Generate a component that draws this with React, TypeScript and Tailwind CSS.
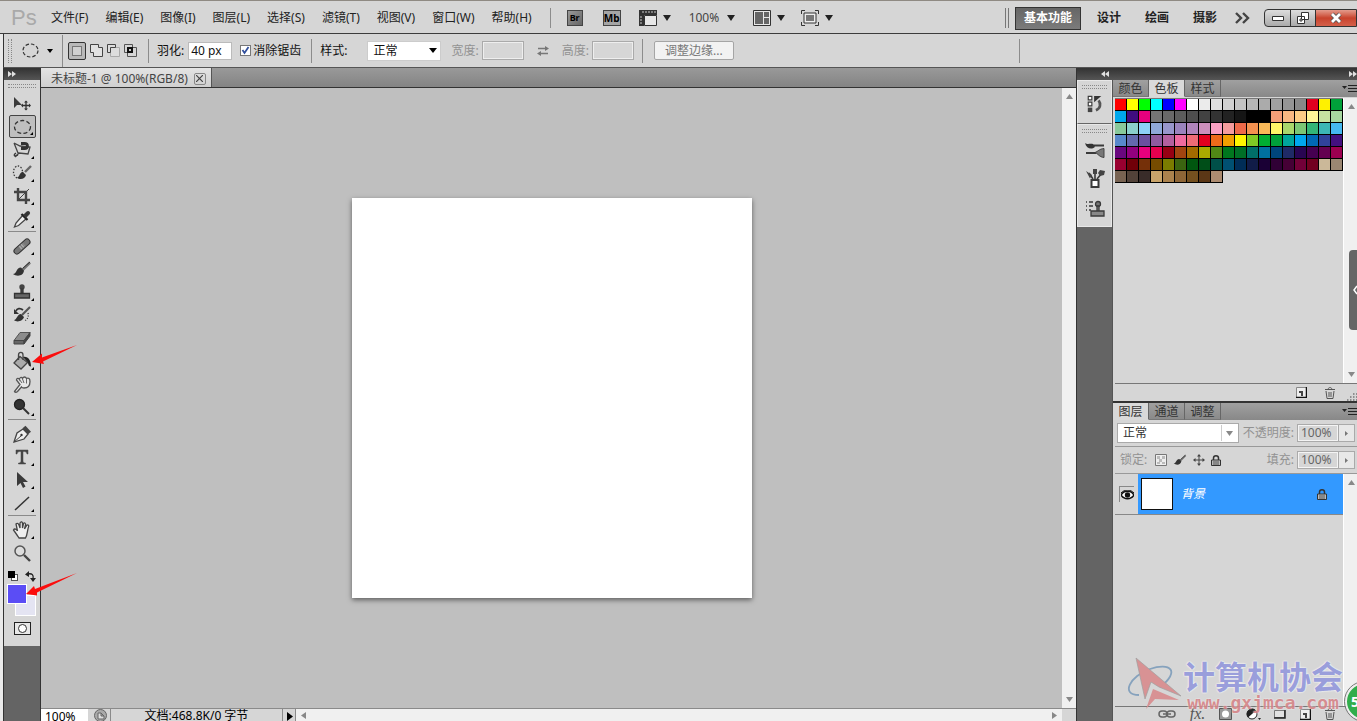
import type { ReactNode } from "react";
import { clsx } from "clsx";

const MENUS = ["文件(F)", "编辑(E)", "图像(I)", "图层(L)", "选择(S)", "滤镜(T)", "视图(V)", "窗口(W)", "帮助(H)"];

const SWATCHES = [
  "ff0000 ffff00 00ff00 00ffff 0000ff ff00ff ffffff ebebeb dedede d1d1d1 c3c3c3 b7b7b7 ababab a0a0a0 959595 898989 e1001f fff100 00a13a",
  "00a8ec 3f0d7f e6007e 747474 686868 5c5c5c 4e4e4e 424242 333333 222222 151515 000000 000000 f49f78 f8b882 fccd86 fff799 c6e2a0 a6d7a0",
  "89c99b 8bcfcc 8dd0f7 8fa9d9 9796cb 9a83bd b084bb cb8ebb faa0c3 f59c9d ee6a4a f39150 f7b858 fff668 aad66c 7bc675 33b577 3cb7b5 45b8f0",
  "5888cb 6369ae 6b4f9f 905a9f b3609f ee6a9f ee6b76 e2001f ee6a1a f29f00 fff500 7fcb25 00ae32 00a13a 00a59c 00a6ee 0068b5 30429a 43107f",
  "6a077f 92007e e8007d e7004f 970013 a14410 a36b00 aaa900 508815 00771e 006f26 006f69 00709f 00467c 1f2a66 280552 450050 640050 9c0050",
  "990030 710008 753009 764c00 7b7c00 3b6410 00570f 004e18 005049 005072 002d57 111c48 1a0035 300035 450035 720038 720020 cbb899 9b8772",
  "786352 524239 392c29 c9a46a ab824d 8e6637 74501f 5b3716 ac8b70",
].flatMap((row) => row.split(" "));

interface IconProps {
  children: ReactNode;
  size?: number;
}

function Icon({ children, size = 20 }: IconProps) {
  return (
    <svg width={size} height={size} viewBox="0 0 20 20" fill="none" stroke="#3a3a3a" strokeWidth="1.3" className="shrink-0">
      {children}
    </svg>
  );
}

const brush = (
  <>
    <path d="M18 3.500 11 10.500" stroke="#777" strokeWidth="2.600" />
    <path d="M18 3 10.500 9.500" stroke="#333" strokeWidth="1" />
    <path d="M1 15C5 15 4 8.500 9 8.500L12 11.500C11.500 17 5 18 1 15Z" fill="#333" stroke="none" />
  </>
);

const stamp = (
  <>
    <circle cx="10" cy="5" r="2.700" fill="#444" stroke="none" />
    <path d="M9 7h2v5H9z" fill="#444" />
    <path d="M2.500 11.500h15v4.500h-15z" fill="#666" stroke="#333" />
  </>
);

const TOOL_GROUPS: { name: string; icon: ReactNode; active?: boolean; single?: boolean }[][] = [
  [
    {
      name: "移动工具",
      single: true,
      icon: (
        <>
          <path d="M2 3v11l3-3h5z" fill="#3a3a3a" stroke="none" />
          <path d="M10 11.500h8M14 7.500v8" stroke="#333" />
          <path d="m9 11.500 2-2v4zM19 11.500l-2-2v4zM14 6.500l-2 2h4zM14 16.500l-2-2h4z" fill="#333" stroke="none" />
        </>
      ),
    },
    { name: "椭圆选框工具", active: true, icon: <ellipse cx="10.500" cy="10" rx="8" ry="6.500" stroke="#333" strokeDasharray="4 2.300" /> },
    {
      name: "磁性套索工具",
      icon: (
        <>
          <path d="m2 3 6 3 10 1-2 7-9-1-4 4M2 3l4 10" stroke="#444" />
          <path d="M9 3.500h3.500c4 0 4 5 0 5H9" stroke="#333" strokeWidth="2.800" />
          <path d="M4 13c-3 2-2 4 2 2" />
        </>
      ),
    },
    {
      name: "快速选择工具",
      icon: (
        <>
          <ellipse cx="6" cy="9" rx="4.500" ry="6" strokeDasharray="1.500 1.500" />
          <path d="m19 3-6 6" stroke="#666" strokeWidth="2.400" />
          <path d="M5 14.500c3-.5 2-5 6-5.500l3 3c-1 4-6 5.500-9 2.500Z" fill="#333" stroke="none" />
        </>
      ),
    },
    {
      name: "裁剪工具",
      icon: (
        <>
          <path d="M6 2v12h12M2 6h12v12" stroke="#444" strokeWidth="2.400" />
          <path d="M6.500 13.500 17 3" stroke="#444" strokeWidth="1" />
        </>
      ),
    },
    {
      name: "吸管工具",
      icon: (
        <>
          <path d="m11 6 3.500 3.500-8 7-4 1.500 1.500-4z" fill="#eee" stroke="#444" />
          <path d="m9.500 5 6 6" stroke="#222" strokeWidth="2.200" />
          <path d="m12 6 3-3c2-1 3 1 2 2l-3 3z" fill="#333" />
        </>
      ),
    },
  ],
  [
    {
      name: "污点修复画笔工具",
      icon: (
        <>
          <path d="m5 15 10-9" stroke="#333" strokeWidth="7" strokeLinecap="round" />
          <path d="m5 15 10-9" stroke="#777" strokeWidth="5" strokeLinecap="round" />
          <path d="m8 12 4-3.500" stroke="#aaa" strokeWidth="4" strokeDasharray="1.500 1" />
        </>
      ),
    },
    { name: "画笔工具", icon: brush },
    { name: "仿制图章工具", icon: stamp },
    {
      name: "历史记录画笔工具",
      icon: (
        <>
          <path d="M18 2 10 10" stroke="#555" strokeWidth="2.200" />
          <path d="M2 15c3 0 3-6 7-6l3 3c-1 4-7 6-10 3Z" fill="#333" stroke="none" />
          <path d="M11 5C8 2.500 5 3.500 4 6" stroke="#333" strokeWidth="1.800" />
          <path d="M2 4v5h5z" fill="#333" stroke="none" />
          <path d="M16 8c1 4-1 7-4 8" strokeDasharray="1 1.500" />
        </>
      ),
    },
    {
      name: "橡皮擦工具",
      icon: (
        <>
          <path d="M8 4.500h10l-6 8H2z" fill="#8c8c8c" stroke="#555" strokeWidth="1" />
          <path d="M2 12.500h10V16H2z" fill="#666" stroke="#444" strokeWidth="1" />
          <path d="m12 12.500 6-8V8l-6 8z" fill="#444" stroke="#444" strokeWidth="1" />
        </>
      ),
    },
    {
      name: "油漆桶工具",
      icon: (
        <>
          <path d="m8 5.500 7.500 6L9 18l-7-6z" fill="#aaa" stroke="#444" />
          <path d="M6.500 9V4c0-3.500 4.500-3.500 4.500 0v5" stroke="#444" />
          <path d="M11 6c5-1 8 3 8 9.500-3.500 0-2-4-4.500-5.500z" fill="#222" stroke="none" />
        </>
      ),
    },
    {
      name: "涂抹工具",
      icon: (
        <>
          <path d="M2.500 17.500 8 10.500 4.500 6C4.500 4 6.500 4 7.500 5.500c0-2 2-3 3-1 1-2 3-2 4 0 2-1 3.500 0 3.500 3 0 4-2 6.500-6 6.500-2 0-2.500-1-2.500-1l-4 4.500c-1 1-3 1-3 0Z" fill="#e8e8e8" stroke="#555" />
          <path d="m7.500 5.500 2.500 3.500M10.500 5l1.500 4M14.500 5v4.500" stroke="#666" strokeWidth="1" />
        </>
      ),
    },
    {
      name: "减淡工具",
      icon: (
        <>
          <circle cx="7.500" cy="7.500" r="5" fill="#333" stroke="#222" />
          <path d="m11 11 6 6" stroke="#333" strokeWidth="2" />
        </>
      ),
    },
  ],
  [
    {
      name: "钢笔工具",
      icon: (
        <>
          <path d="M2 18 5 9l6-4 5 5-4 5z" fill="#eee" stroke="#444" />
          <path d="m12 3 5.500 6" stroke="#444" strokeWidth="4" />
          <path d="m2 18 7-6" stroke="#444" strokeWidth="1" />
          <circle cx="9.500" cy="11" r="1.200" fill="#333" stroke="none" />
        </>
      ),
    },
    {
      name: "横排文字工具",
      icon: (
        <path d="M4 3h12v4h-1c-.5-2-1-2.500-4-2.500V14c0 1.500 1 2 2.500 2v1h-7v-1C8 16 9 15.500 9 14V4.500C6 4.500 5.500 5 5 7H4z" fill="#444" stroke="#444" strokeWidth=".5" />
      ),
    },
    { name: "路径选择工具", icon: <path d="M5 2v14l3.500-3 2.500 5 2.500-1.500L11 12h5z" fill="#3a3a3a" stroke="none" /> },
    { name: "直线工具", icon: <path d="M3 17 17 4" stroke="#333" strokeWidth="1.500" /> },
  ],
  [
    {
      name: "抓手工具",
      icon: (
        <>
          <path d="M7 18c-2-3-4-6-5.500-8 1-2 3-.5 4 1L4 4c1.500-1.500 2.500 0 3 1l1 3V3c1-2 2.500-1 2.500.5V8l1-4.500c1-1.500 2.500 0 2 1.500l-1 4 2.500-4c1.500-.5 2 1 1.500 2-1 2-1 8-3 11z" fill="#eee" stroke="#444" />
        </>
      ),
    },
    {
      name: "缩放工具",
      single: true,
      icon: (
        <>
          <circle cx="8" cy="8" r="5" fill="#ddd" stroke="#555" strokeWidth="1.500" />
          <path d="m12 12 6 6" stroke="#444" strokeWidth="2.400" />
        </>
      ),
    },
  ],
];

function Caret() {
  return (
    <svg width="8" height="6" viewBox="0 0 8 6" className="shrink-0">
      <path d="M0 0h8L4 6z" fill="#222" />
    </svg>
  );
}

function Chevrons({ left }: { left?: boolean }) {
  return (
    <svg width="8" height="6" viewBox="0 0 8 6" className={left ? "rotate-180" : ""}>
      <path d="m0 0 4 3-4 3zM4 0l4 3-4 3z" fill="#e0e0e0" />
    </svg>
  );
}

function Grip() {
  return <div className="mx-1 mt-1 h-1 border-y border-dotted border-[#888]" />;
}

function Divider() {
  return <div className="h-6 w-px shrink-0 bg-[#8c8c8c]" />;
}

function MenuBar() {
  return (
    <header className="flex h-[34px] shrink-0 items-center border-t border-b border-t-[#8f8a83] border-b-[#3c3c3c] bg-[#d6d6d6] pt-0.5 pl-[11px]">
      <span className="w-10 font-['Liberation_Sans'] text-[22px] leading-6 text-[#a9a9a9]">Ps</span>
      <nav className="flex gap-[17px] whitespace-nowrap text-[#222]">
        {MENUS.map((menu) => (
          <button key={menu}>{menu}</button>
        ))}
      </nav>
      <div className="ml-[18px] h-5 w-px bg-[#8c8c8c]" />
      <button className="ml-4 h-4 w-4 border border-[#444] bg-gradient-to-br from-[#999] to-[#666] text-[9px] leading-3 font-bold">Br</button>
      <button className="ml-5 h-4 w-[18px] border border-[#444] bg-[#a5a5a5] text-[10px] leading-3 font-bold">Mb</button>
      <button className="ml-[18px] flex items-center gap-1.5" aria-label="查看额外内容">
        <svg width="18" height="16" viewBox="0 0 18 16">
          <path d="M0 0h18v5H5v11H0z" fill="#333" />
          <path d="M5.500 5.500h12v10h-12z" fill="#e8e8e8" stroke="#333" />
          <path d="M4 1v2M7 1v2M10 1v2M13 1v2M16 1v2M1 7h2M1 10h2M1 13h2" stroke="#ccc" />
        </svg>
        <Caret />
      </button>
      <button className="ml-[18px] flex items-center gap-2 text-[#444]">
        100%
        <Caret />
      </button>
      <button className="ml-[18px] flex items-center gap-1.5" aria-label="排列文档">
        <svg width="18" height="16" viewBox="0 0 18 16">
          <path d="M.5.500h17v15H.5z" fill="#e8e8e8" stroke="#333" />
          <path d="M2 2h8v12H2zM11 2h5v5h-5zM11 8h5v6h-5z" fill="#666" />
        </svg>
        <Caret />
      </button>
      <button className="ml-4 flex items-center gap-1.5" aria-label="屏幕模式">
        <svg width="18" height="16" viewBox="0 0 18 16" fill="none" stroke="#333">
          <path d="M.5 4V.500H4M14 .500h3.500V4M17.500 12v3.500H14M4 15.500H.5V12" />
          <path d="M3 3h12v10H3z" fill="#eee" />
          <path d="M5 5h8v6H5z" fill="#777" stroke="none" />
        </svg>
        <Caret />
      </button>
      <div className="ml-auto h-5 w-1 border-x border-[#777]" />
      <button className="ml-1.5 h-[23px] w-[66px] shrink-0 border border-[#333] bg-gradient-to-b from-[#666] to-[#7b7b7b] font-bold text-white">基本功能</button>
      <div className="ml-4 flex gap-6 font-bold whitespace-nowrap text-[#222]">
        <button>设计</button>
        <button>绘画</button>
        <button>摄影</button>
      </div>
      <button className="ml-[18px]" aria-label="更多工作区">
        <svg width="15" height="12" viewBox="0 0 15 12" fill="none" stroke="#444" strokeWidth="2.400">
          <path d="m1 1 5 5-5 5M8 1l5 5-5 5" />
        </svg>
      </button>
      <div className="ml-3.5 flex h-[18px] shrink-0 overflow-hidden rounded-l border border-[#333] bg-gradient-to-b from-[#ddd] to-[#aaa]">
        <button className="flex w-[25px] items-center justify-center" aria-label="最小化">
          <svg width="12" height="5" viewBox="0 0 12 5">
            <path d="M.5.500h11v4H.5z" fill="#fff" stroke="#333" />
          </svg>
        </button>
        <button className="flex w-[26px] items-center justify-center border-x border-[#333]" aria-label="还原">
          <svg width="12" height="12" viewBox="0 0 12 12" fill="#fff" stroke="#333">
            <path d="M4.500.500h7v7h-7zM.5 4.500h7v7h-7z" />
            <path d="M3 7h2v2H3z" />
          </svg>
        </button>
        <button className="flex w-10 items-center justify-center bg-gradient-to-b from-[#e39a8c] via-[#c8422c] to-[#d4604a]" aria-label="关闭">
          <svg width="14" height="12" viewBox="0 0 14 12" fill="none">
            <path d="m3 2 8 8M11 2l-8 8" stroke="#555" strokeWidth="4.500" />
            <path d="m3 2 8 8M11 2l-8 8" stroke="#fff" strokeWidth="2.800" />
          </svg>
        </button>
      </div>
    </header>
  );
}

function OptionsBar() {
  return (
    <section className="flex h-[34px] shrink-0 items-center border-b border-l border-b-[#555] border-l-[#333] bg-[#d6d6d6] pl-1 whitespace-nowrap text-[#111]">
      <div className="h-6 w-1 border-x border-dotted border-[#888]" />
      <button className="ml-2.5 flex w-10 items-center gap-2" aria-label="工具预设">
        <svg width="17" height="15" viewBox="0 0 17 15" fill="none">
          <ellipse cx="8.500" cy="7.500" rx="7.500" ry="6.500" stroke="#333" strokeWidth="1.200" strokeDasharray="3.500 2" />
        </svg>
        <svg width="6" height="4" viewBox="0 0 6 4">
          <path d="M0 0h6L3 4z" />
        </svg>
      </button>
      <div className="h-8 w-px bg-[#8c8c8c]" />
      <div className="ml-[5px] flex items-center gap-1">
        <button className="flex h-[18px] w-[18px] items-center justify-center rounded-xs border border-[#333] bg-[#b9b9b9]" aria-label="新选区">
          <span className="h-2.5 w-2.5 border border-[#777] bg-[#d0d0d0]" />
        </button>
        <button aria-label="添加到选区">
          <svg width="13" height="13" viewBox="0 0 13 13" fill="#e2e2e2" stroke="#444">
            <path d="M.5.500h8v3h4v9h-9v-4h-3z" />
          </svg>
        </button>
        <button aria-label="从选区减去">
          <svg width="13" height="13" viewBox="0 0 13 13" fill="#ddd">
            <path d="M3.500 3.500h9v9h-9z" stroke="#aaa" />
            <path d="M.5 8.500v-8h8v3h-5v5z" stroke="#444" />
          </svg>
        </button>
        <button aria-label="与选区交叉">
          <svg width="13" height="13" viewBox="0 0 13 13" fill="none" stroke="#555">
            <path d="M.5.500h8v8h-8zM3.500 3.500h9v9h-9z" />
            <path d="M4 4h4v4H4z" fill="#ccc" stroke="#111" strokeWidth="2" />
          </svg>
        </button>
      </div>
      <div className="ml-[11px]">
        <Divider />
      </div>
      <label className="ml-2 flex items-center gap-1">
        羽化:
        <input defaultValue="40 px" className="h-[18px] w-11 border border-[#bbb] bg-white px-0.5" />
      </label>
      <label className="ml-2 flex items-center gap-0.5">
        <span className="relative flex h-[11px] w-[11px]">
          <input type="checkbox" defaultChecked className="peer h-[11px] w-[11px] appearance-none border border-[#777] bg-white" />
          <svg width="11" height="11" viewBox="0 0 11 11" className="pointer-events-none absolute inset-0 hidden peer-checked:block">
            <path d="m2.500 5 2 3 4-6" fill="none" stroke="#314f9c" strokeWidth="1.800" />
          </svg>
        </span>
        消除锯齿
      </label>
      <div className="ml-2.5">
        <Divider />
      </div>
      <label className="ml-2 flex items-center gap-5">
        样式:
        <span className="relative flex items-center">
          <select className="h-5 w-[74px] appearance-none border border-[#ccc] bg-white pl-[5px]">
            <option>正常</option>
          </select>
          <svg width="8" height="5" viewBox="0 0 8 5" className="pointer-events-none absolute right-1">
            <path d="M0 0h8L4 5z" />
          </svg>
        </span>
      </label>
      <label className="ml-2.5 flex items-center gap-[3px] text-[#929292]">
        宽度:
        <input disabled className="h-[19px] w-[42px] border border-[#aaa] outline-1 -outline-offset-2 outline-[#eee]" />
      </label>
      <button className="ml-[13px]" disabled aria-label="高度和宽度互换">
        <svg width="12" height="10" viewBox="0 0 12 10" stroke="#777" fill="#777">
          <path d="M1 2.500h8M3 7.500h8" strokeWidth="1.500" />
          <path d="m8 0 4 2.500L8 5zM4 5 0 7.500 4 10z" stroke="none" />
        </svg>
      </button>
      <label className="ml-[13px] flex items-center gap-[3px] text-[#929292]">
        高度:
        <input disabled className="h-[19px] w-[42px] border border-[#aaa] outline-1 -outline-offset-2 outline-[#eee]" />
      </label>
      <div className="ml-2">
        <Divider />
      </div>
      <button disabled className="ml-[11px] h-[19px] w-20 rounded-xs border border-[#a5a5a5] bg-[#f2f2f2] leading-4 text-[#777]">
        调整边缘...
      </button>
      <div className="mr-[337px] ml-auto">
        <Divider />
      </div>
    </section>
  );
}

function Toolbar() {
  return (
    <aside className="relative flex w-[38px] shrink-0 flex-col border-x border-[#333] bg-[#646464]">
      <div className="flex h-3 items-center bg-gradient-to-b from-[#333] to-[#555] pl-1">
        <Chevrons />
      </div>
      <div className="flex h-[566px] flex-col bg-[#d6d6d6]">
        <Grip />
        <div className="mt-1">
          {TOOL_GROUPS.map((group, i) => (
            <div key={i} className={clsx(i > 0 && "mt-px")}>
              {i > 0 && <div className="mx-1 mb-0.5 h-px bg-[#8a8a8a]" />}
              {group.map((tool) => (
                <button
                  key={tool.name}
                  title={tool.name}
                  className={clsx(
                    "relative mx-auto flex h-[23px] w-[27px] items-center justify-center",
                    tool.active && "rounded-xs border border-[#444] bg-[#bfbfbf]"
                  )}
                >
                  <Icon>{tool.icon}</Icon>
                  {!tool.single && (
                    <svg width="3" height="3" viewBox="0 0 3 3" className="absolute right-0.5 bottom-0.5">
                      <path d="M3 0v3H0z" />
                    </svg>
                  )}
                </button>
              ))}
            </div>
          ))}
        </div>
        <div className="mx-1 mt-1 flex h-4 items-center justify-between">
          <button className="relative h-2.5 w-2.5" aria-label="默认前景色和背景色">
            <span className="absolute right-0 bottom-0 h-[7px] w-[7px] border border-[#555] bg-white" />
            <span className="absolute top-0 left-0 h-[7px] w-[7px] bg-black" />
          </button>
          <button aria-label="切换前景色和背景色">
            <svg width="11" height="11" viewBox="0 0 11 11" fill="none" stroke="#222" strokeWidth="1.400">
              <path d="M3 3c4-1 6 1 5 5" />
              <path d="M0 3.500 4 0v6zM5 7h6l-3 4z" fill="#222" stroke="none" />
            </svg>
          </button>
        </div>
        <div className="relative mr-1 ml-[3px] h-8">
          <button className="absolute right-0 bottom-0 h-[21px] w-[21px] border border-white bg-[#e4e4f2]" aria-label="背景色" />
          <button className="absolute top-0 left-0 h-5 w-5 border border-white bg-[#5b4df5]" aria-label="前景色" />
        </div>
        <button className="mx-auto mt-1.5 flex h-[13px] w-[17px] items-center justify-center border border-[#222] bg-[#e8e8e8]" aria-label="快速蒙版">
          <span className="h-[9px] w-[9px] rounded-full border border-[#333] bg-white" />
        </button>
      </div>
      {/* red pointers at the paint bucket and the foreground colour */}
      <svg width="46" height="22" viewBox="0 0 46 22" className="pointer-events-none absolute top-[276px] left-7 z-10">
        <path d="M0 18 10 9.500v4L45 1 11 17.500 12 20z" fill="#fb0d0d" />
      </svg>
      <svg width="52" height="26" viewBox="0 0 52 26" className="pointer-events-none absolute top-[504px] left-[22px] z-10">
        <path d="m0 22 8-8 1 3L51 1 11 20.500v3z" fill="#fb0d0d" />
      </svg>
    </aside>
  );
}

function ScrollArrow({ className }: { className?: string }) {
  return (
    <svg width="7" height="5" viewBox="0 0 7 5" className={className}>
      <path d="M0 5h7L3.500 0z" fill="#888" />
    </svg>
  );
}

function VerticalScroll() {
  return (
    <div className="flex w-3.5 shrink-0 flex-col items-center justify-between bg-[#f0f0f0] py-1.5">
      <ScrollArrow />
      <ScrollArrow className="rotate-180" />
    </div>
  );
}

function Document() {
  return (
    <main className="flex min-w-0 flex-1 flex-col">
      <div className="flex h-5 shrink-0 border-b border-[#333] bg-gradient-to-b from-[#999] to-[#848484]">
        <div className="flex items-center gap-1.5 border-r border-[#555] bg-gradient-to-b from-[#e4e4e4] to-[#d0d0d0] pt-0.5 pr-[5px] pl-2.5 whitespace-nowrap text-[#444]">
          未标题-1 @ 100%(RGB/8)
          <button className="flex h-3 w-3 items-center justify-center rounded-xs border border-[#888]" aria-label="关闭文档">
            <svg width="7" height="7" viewBox="0 0 7 7" stroke="#444" strokeWidth="1.200">
              <path d="m0 0 7 7M7 0 0 7" />
            </svg>
          </button>
        </div>
      </div>
      <div className="flex min-h-0 flex-1">
        <div className="flex flex-1 items-center justify-center bg-[#bfbfbf]">
          <div className="h-[400px] w-[400px] bg-white shadow-[0_2px_5px_rgba(0,0,0,0.5)]" />
        </div>
        <VerticalScroll />
      </div>
      <footer className="flex h-[13px] shrink-0 overflow-hidden border-t border-[#8a8a8a] bg-[#d6d6d6] whitespace-nowrap">
        <input aria-label="缩放比例" defaultValue="100%" className="h-4 w-[47px] bg-white pl-1 leading-4" />
        <div className="w-[23px] shrink-0 border-r border-[#8a8a8a] pl-1.5">
          <svg width="13" height="13" viewBox="0 0 13 13" fill="#aaa" stroke="#666">
            <circle cx="6.500" cy="6.500" r="6" />
            <path d="M4 10V4h3l3 3v3zM7 4v3h3" fill="#ddd" />
          </svg>
        </div>
        <p className="w-[171px] text-center leading-[14px]">文档:468.8K/0 字节</p>
        <button className="w-3.5 shrink-0 border-x border-[#8a8a8a] pt-0.5 pl-1" aria-label="状态菜单">
          <svg width="6" height="9" viewBox="0 0 6 9">
            <path d="M0 0v9l6-4.500z" />
          </svg>
        </button>
        <div className="flex flex-1 items-center justify-between bg-[#f0f0f0] px-1">
          <ScrollArrow className="-rotate-90" />
          <ScrollArrow className="rotate-90" />
        </div>
        <div className="w-3.5" />
      </footer>
    </main>
  );
}

function Dock() {
  return (
    <div className="flex w-9 shrink-0 flex-col border-r border-[#555] bg-[#646464]">
      <div className="h-11 border border-[#e8e8e8] border-b-[#666] bg-[#d6d6d6]">
        <Grip />
        <button className="mx-auto mt-1.5 block" title="历史记录">
          <Icon size={18}>
            <path d="M2.500 1.500h4v4h-4zM2.500 8h4v4h-4z" fill="#fff" />
            <path d="M2 14h5v5H2z" fill="#444" stroke="none" />
            <path d="M11 17c5-2 6-7 3-11" strokeWidth="3" stroke="#555" />
            <path d="M9 8V1h8z" fill="#333" stroke="none" />
          </Icon>
        </button>
      </div>
      <div className="flex h-[103px] flex-col border border-[#e8e8e8] bg-[#d6d6d6]">
        <Grip />
        <div className="flex flex-1 flex-col items-center gap-2.5 pt-1.5">
          <button title="画笔">
            <Icon>
              <path d="M9 6.500h10M1 14h10" strokeWidth="2" />
              <path d="M0 4c3 2 5 0 8 1 3 2 2 4-1 4.500C4 10 1 8 0 4Z" fill="#333" stroke="none" />
              <path d="M10 13.500c3-1 4-3.500 9-4v9c-5-.5-6-4-9-5z" fill="#777" stroke="#444" strokeWidth="1" />
            </Icon>
          </button>
          <button title="画笔预设">
            <Icon>
              <path d="M6.500 11h7v7h-7z" fill="#fff" strokeWidth="2" />
              <path d="m8 10-4-6M10 10V2M12 10l5-6" strokeWidth="1.600" />
              <path d="m1 2 6 4-2 3.500zM8 0h4v5H8zM13 4l2-3 5 1-1 4-4 1z" fill="#444" stroke="none" />
            </Icon>
          </button>
          <button title="仿制源">
            <Icon>
              <path d="M1 3h1M4 3h4M1 7h1M4 7h4M1 11h1M4 11h2" />
              <circle cx="13" cy="5" r="2.500" fill="#777" />
              <path d="M12 7h2v5h-2zM6 12h13v5H6z" fill="#888" />
            </Icon>
          </button>
        </div>
      </div>
    </div>
  );
}

interface PanelTabsProps {
  tabs: string[];
  active: string;
}

function PanelTabs({ tabs, active }: PanelTabsProps) {
  return (
    <div className="flex h-[17px] shrink-0 bg-gradient-to-b from-[#a0a0a0] to-[#888]">
      {tabs.map((tab) => (
        <button
          key={tab}
          className={clsx(
            "w-9 shrink-0 border-r border-b border-r-[#666] leading-[18px] text-[#333]",
            tab === active ? "border-b-[#d9d9d9] bg-[#d9d9d9]" : "border-b-[#777]"
          )}
        >
          {tab}
        </button>
      ))}
      <button className="ml-auto" aria-label="面板菜单">
        <svg width="15" height="9" viewBox="0 0 15 9">
          <path d="M0 2h5L2.500 5z" fill="#222" />
          <path d="M6 1.500h9M6 4.500h9M6 7.500h9" stroke="#222" />
        </svg>
      </button>
    </div>
  );
}

const newIcon = (
  <svg width="11" height="11" viewBox="0 0 11 11">
    <path d="M.5.500h10v10H.5z" fill="#eee" stroke="#888" />
    <path d="M0 10.500h10.500V0" fill="none" stroke="#111" strokeWidth="1.500" />
    <path d="M3 4h4v5H5V6H3z" fill="#444" />
  </svg>
);

const trashIcon = (
  <svg width="10" height="12" viewBox="0 0 10 12" fill="none" stroke="#555">
    <path d="M3 2C4 0 6 0 7 2M0 2.500h10M1 4l1 7.500h6L9 4M4 5v5M6 5v5" />
  </svg>
);

const lockIcon = (
  <svg width="10" height="11" viewBox="0 0 10 11">
    <path d="M2.500 5V3c0-3 5-3 5 0v2" fill="none" stroke="#333" strokeWidth="1.500" />
    <path d="M.5 5h9v5.500h-9z" fill="#bbb" stroke="#333" />
    <path d="M2 7h6M2 9h6" stroke="#555" />
  </svg>
);

function SwatchesPanel() {
  return (
    <section className="shrink-0 border-b-2 border-[#333] bg-[#d6d6d6]">
      <PanelTabs tabs={["颜色", "色板", "样式"]} active="色板" />
      <div className="flex h-[286px] pt-px pl-0.5">
        <div className="w-[229px] shrink-0 border-r border-white">
          <div className="grid grid-cols-19 content-start border-t border-[#777]">
            {SWATCHES.map((color, i) => (
              <button
                key={i}
                aria-label={`#${color}`}
                className="h-3 border-r border-b border-black"
                style={{ backgroundColor: `#${color}` }}
              />
            ))}
          </div>
        </div>
        <VerticalScroll />
      </div>
      <div className="ml-0.5 flex h-[18px] items-center justify-end border-t border-[#777]">
        <button className="mr-[18px]" aria-label="新建色板">
          {newIcon}
        </button>
        <button className="mr-3" aria-label="删除色板">
          {trashIcon}
        </button>
        <svg width="10" height="10" viewBox="0 0 10 10" className="self-end" stroke="#777" strokeWidth="1.500" strokeDasharray="1.500 1.500">
          <path d="M0 9h10M3 6h7M6 3h4" />
        </svg>
      </div>
    </section>
  );
}

function Percent({ label }: { label: string }) {
  return (
    <label className="ml-auto flex items-center gap-[3px] whitespace-nowrap text-[#929292]">
      {label}:
      <span className="flex h-[18px] border border-[#aaa] bg-[#e8e8e8]">
        <input disabled defaultValue="100%" className="w-10 border border-[#f4f4f4] bg-[#d6d6d6] pl-0.5 text-[#666]" />
        <span className="flex w-4 items-center justify-center border-l border-[#aaa]">
          <svg width="3" height="5" viewBox="0 0 3 5">
            <path d="M0 0v5l3-2.500z" fill="#777" />
          </svg>
        </span>
      </span>
    </label>
  );
}

function LayersPanel() {
  return (
    <section className="flex min-h-0 flex-1 flex-col bg-[#d6d6d6]">
      <PanelTabs tabs={["图层", "通道", "调整"]} active="图层" />
      <div className="ml-0.5 flex h-[27px] shrink-0 items-center border-b border-[#999] pr-0.5 pl-0.5">
        <span className="relative flex items-center">
          <select aria-label="混合模式" className="h-5 w-[122px] appearance-none border border-[#aaa] bg-white pl-[5px] text-[#333]">
            <option>正常</option>
          </select>
          <span className="pointer-events-none absolute right-0.5 flex h-4 w-4 items-center justify-center border-l border-[#ccc]">
            <ScrollArrow className="rotate-180" />
          </span>
        </span>
        <Percent label="不透明度" />
      </div>
      <div className="ml-0.5 flex h-[27px] shrink-0 items-center border-b border-[#999] pr-0.5 pl-[5px]">
        <span className="mr-2 text-[#929292]">锁定:</span>
        <div className="flex items-center gap-1.5">
          <button aria-label="锁定透明像素">
            <svg width="12" height="12" viewBox="0 0 12 12">
              <path d="M.5.500h11v11H.5z" fill="#eee" stroke="#777" />
              <path d="M2 2h3v3H2zM7 2h3v3H7zM4 5h3v3H4zM2 8h3v2H2zM7 8h3v2H7z" fill="#bbb" />
            </svg>
          </button>
          <button aria-label="锁定图像像素">
            <Icon size={14}>{brush}</Icon>
          </button>
          <button aria-label="锁定位置">
            <svg width="12" height="12" viewBox="0 0 12 12" fill="#444">
              <path d="M6 1v10M1 6h10" stroke="#444" />
              <path d="M6 0 4 2.500h4zM6 12 4 9.500h4zM0 6l2.500-2v4zM12 6 9.500 4v4z" />
            </svg>
          </button>
          <button aria-label="锁定全部">{lockIcon}</button>
        </div>
        <Percent label="填充" />
      </div>
      <div className="flex min-h-0 flex-1 pl-0.5">
        <div className="w-[229px] shrink-0 border-r border-white">
          <div className="flex h-[41px] border-b border-[#888]">
            <button className="flex w-[23px] shrink-0 items-center justify-center" aria-label="指示图层可见性">
              <span className="flex h-4 w-[15px] items-center justify-center border-t border-l border-[#888]">
                <svg width="13" height="10" viewBox="0 0 13 10">
                  <path d="M0 5c3-5 10-5 13 0-3 5-10 5-13 0Z" fill="#fff" stroke="#111" strokeWidth="1.500" />
                  <circle cx="6.500" cy="5" r="2.700" fill="#111" />
                  <path d="M0 3c4-4 9-4 13 0" fill="none" stroke="#111" />
                </svg>
              </span>
            </button>
            <div className="flex flex-1 items-center bg-[#3399ff] pr-4 pl-[3px] text-white">
              <span className="h-8 w-8 border border-[#111] bg-white" />
              <span className="ml-2 italic">背景</span>
              <span className="ml-auto">{lockIcon}</span>
            </div>
          </div>
        </div>
        <VerticalScroll />
      </div>
      <div className="ml-0.5 flex h-[15px] shrink-0 items-center justify-between border-t border-[#777] pr-[22px] pl-[43px]">
        <button aria-label="链接图层">
          <svg width="18" height="8" viewBox="0 0 18 8" fill="none" stroke="#666" strokeWidth="1.500">
            <rect x="1" y="1" width="8" height="6" rx="3" />
            <rect x="9" y="1" width="8" height="6" rx="3" />
            <path d="M5 4h8" />
          </svg>
        </button>
        <button className="font-['Liberation_Serif'] text-base leading-3 text-[#555] italic" aria-label="添加图层样式">
          fx.
        </button>
        <button aria-label="添加图层蒙版">
          <svg width="13" height="12" viewBox="0 0 13 12">
            <path d="M.5.500h12v11H.5z" fill="#999" stroke="#555" />
            <circle cx="6.500" cy="6" r="3.500" fill="#fff" />
          </svg>
        </button>
        <button aria-label="创建调整图层">
          <svg width="15" height="12" viewBox="0 0 15 12">
            <circle cx="6" cy="6" r="5" fill="#fff" stroke="#222" />
            <path d="M10 2.500A5 5 0 0 0 2 9.500zM12 10h3l-1.500 2z" fill="#222" />
          </svg>
        </button>
        <button aria-label="创建新组">
          <svg width="12" height="10" viewBox="0 0 12 10">
            <path d="M.5 1.500h10v7H.5z" fill="#e2e2e2" stroke="#777" />
            <path d="M0 9h11V1" fill="none" stroke="#222" strokeWidth="1.500" />
          </svg>
        </button>
        <button aria-label="创建新图层">{newIcon}</button>
        <button aria-label="删除图层">{trashIcon}</button>
      </div>
    </section>
  );
}

function Watermark() {
  return (
    <div className="pointer-events-none absolute right-3.5 bottom-2 flex items-end opacity-90">
      <svg width="56" height="58" viewBox="0 0 56 58">
        <path d="M12 40C-7 40 3 21 23 14s31 2 10 18" fill="none" stroke="#7e9dbb" strokeWidth="1.800" />
        <path d="M9 3 54 41 32 32 24 27 18 44z" fill="#d98b8d" stroke="#999" strokeWidth=".7" />
        <path d="m26 34 26 11-24-1-9 10z" fill="#d98b8d" />
      </svg>
      <div className="w-40">
        <p className="text-[32px] leading-8 font-bold whitespace-nowrap text-[#9499dc] [text-shadow:0_0_2px_#fff,0_0_2px_#fff]">计算机协会</p>
        <p className="text-center font-['DejaVu_Sans_Mono'] text-lg leading-5 font-bold text-[#d58689] [text-shadow:0_0_2px_#fff]">www.gxjmca.com</p>
      </div>
    </div>
  );
}

export default function App() {
  return (
    <div className="relative flex h-screen flex-col overflow-hidden bg-[#e9e9e9] font-['Noto_Sans','Noto_Sans_CJK_SC',sans-serif] text-xs text-black">
      <MenuBar />
      <div className="flex min-h-0 flex-1 flex-col pl-[3px]">
        <OptionsBar />
        <div className="flex min-h-0 flex-1">
          <Toolbar />
          <Document />
          <div className="flex w-[281px] shrink-0 flex-col border-l border-[#333]">
            <div className="flex h-3 shrink-0 items-center justify-between bg-gradient-to-b from-[#333] to-[#555] pl-6">
              <Chevrons left />
              <Chevrons />
            </div>
            <div className="flex min-h-0 flex-1">
              <Dock />
              <div className="flex min-w-0 flex-1 flex-col">
                <SwatchesPanel />
                <LayersPanel />
              </div>
            </div>
          </div>
        </div>
      </div>
      <button className="absolute top-[250px] right-0 flex h-20 w-2 items-center rounded-l bg-[#666]" aria-label="展开侧栏">
        <svg width="8" height="10" viewBox="0 0 8 10" fill="none" stroke="#fff" strokeWidth="1.500">
          <path d="M8 1 5 5l3 4" />
        </svg>
      </button>
      <Watermark />
      <div className="absolute -right-[27px] bottom-0 h-[39px] w-[39px] rounded-full border-2 border-[#eee] bg-[#31ad4b] pl-1 text-sm leading-9 font-bold text-white outline-1 outline-[#777]">
        5
      </div>
    </div>
  );
}
